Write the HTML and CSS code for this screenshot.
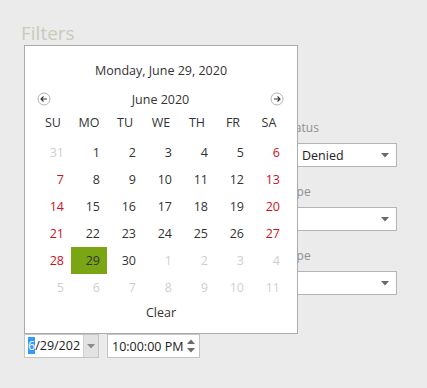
FILE: index.html
```html
<!DOCTYPE html>
<html>
<head>
<meta charset="utf-8">
<link rel="stylesheet" href="styles.css">
</head>
<body>
<div class="page">
  <h1 class="title">Filters</h1>
  <div class="form">
    <div class="col-left">
      <div class="field">
        <div class="label">Date</div>
        <div class="datetime">
          <div class="date-wrap">
            <div class="date-input">
              <span class="date-text"><span class="sel">6</span><span class="caret"></span>/29/2020</span>
              <span class="dd-btn"><svg width="8" height="5" viewBox="0 0 8 5"><path d="M0 0H8L4 4.5Z" fill="#8a8a8a"/></svg></span>
            </div>
            <div class="calendar">
              <div class="cal-title">Monday, June 29, 2020</div>
              <div class="cal-nav">
                <svg class="nav-icon" width="14" height="14" viewBox="0 0 14 14"><circle cx="7" cy="7" r="6" fill="none" stroke="#b4b4b4" stroke-width="1"/><path d="M10 7H4M6.5 4.5L4 7L6.5 9.5" fill="none" stroke="#333" stroke-width="1.1"/></svg>
                <span class="cal-month">June 2020</span>
                <svg class="nav-icon" width="14" height="14" viewBox="0 0 14 14"><circle cx="7" cy="7" r="6" fill="none" stroke="#b4b4b4" stroke-width="1"/><path d="M4 7H10M7.5 4.5L10 7L7.5 9.5" fill="none" stroke="#333" stroke-width="1.1"/></svg>
              </div>
              <div class="cal-grid">
                <span class="dow">SU</span><span class="dow">MO</span><span class="dow">TU</span><span class="dow">WE</span><span class="dow">TH</span><span class="dow">FR</span><span class="dow">SA</span>

                <span class="day other">31</span><span class="day">1</span><span class="day">2</span><span class="day">3</span><span class="day">4</span><span class="day">5</span><span class="day wkend">6</span>
                <span class="day wkend">7</span><span class="day">8</span><span class="day">9</span><span class="day">10</span><span class="day">11</span><span class="day">12</span><span class="day wkend">13</span>
                <span class="day wkend">14</span><span class="day">15</span><span class="day">16</span><span class="day">17</span><span class="day">18</span><span class="day">19</span><span class="day wkend">20</span>
                <span class="day wkend">21</span><span class="day">22</span><span class="day">23</span><span class="day">24</span><span class="day">25</span><span class="day">26</span><span class="day wkend">27</span>
                <span class="day wkend">28</span><span class="day selected">29</span><span class="day">30</span><span class="day other">1</span><span class="day other">2</span><span class="day other">3</span><span class="day other">4</span>
                <span class="day other">5</span><span class="day other">6</span><span class="day other">7</span><span class="day other">8</span><span class="day other">9</span><span class="day other">10</span><span class="day other">11</span>
              </div>
              <div class="cal-clear">Clear</div>
            </div>
          </div>
          <div class="time-input">
            <span class="time-text">10:00:00 PM</span>
            <span class="spin">
              <svg width="8" height="5" viewBox="0 0 8 5"><path d="M0 5H8L4 0.5Z" fill="#6a6a6a"/></svg>
              <svg width="8" height="5" viewBox="0 0 8 5"><path d="M0 0H8L4 4.5Z" fill="#6a6a6a"/></svg>
            </span>
          </div>
        </div>
      </div>
    </div>
    <div class="col-right">
      <div class="field">
        <div class="label">Status</div>
        <div class="select"><span class="select-text">Denied</span><svg width="8" height="5" viewBox="0 0 8 5"><path d="M0 0H8L4 4.5Z" fill="#6a6a6a"/></svg></div>
      </div>
      <div class="field">
        <div class="label">Type</div>
        <div class="select"><span class="select-text"></span><svg width="8" height="5" viewBox="0 0 8 5"><path d="M0 0H8L4 4.5Z" fill="#6a6a6a"/></svg></div>
      </div>
      <div class="field">
        <div class="label">Type</div>
        <div class="select"><span class="select-text"></span><svg width="8" height="5" viewBox="0 0 8 5"><path d="M0 0H8L4 4.5Z" fill="#6a6a6a"/></svg></div>
      </div>
    </div>
  </div>
</div>
</body>
</html>
```

FILE: styles.css
```css
html, body {
  margin: 0;
  padding: 0;
  background: #ebebeb;
  font-family: "Open Sans", "Noto Sans", sans-serif;
  color: #333;
}

.page {
  width: 427px;
  height: 388px;
  padding: 18px 0 0 21px;
  box-sizing: border-box;
}

.title {
  margin: 0;
  font-size: 19px;
  font-weight: 400;
  line-height: 30px;
  color: #c9cabb;
}

.form {
  display: grid;
  grid-template-columns: 263px 113px;
  margin-top: 72px;
}

.col-left {
  padding-left: 3px;
  padding-top: 191px;
}

.field {
  display: flex;
  flex-direction: column;
  gap: 7px;
}

.col-right {
  display: flex;
  flex-direction: column;
  gap: 17px;
}

.label {
  font-size: 12px;
  line-height: 16px;
  color: #8f8f8f;
}

.select {
  height: 24px;
  box-sizing: border-box;
  background: #fff;
  border: 1px solid #b5b5b5;
  display: flex;
  align-items: center;
  justify-content: space-between;
  padding: 0 7px 0 17px;
}

.select-text {
  font-size: 12.5px;
  color: #222;
}

.datetime {
  display: flex;
  gap: 8px;
}

.date-wrap {
  position: relative;
}

.date-input {
  width: 75px;
  height: 24px;
  box-sizing: border-box;
  background: #fff;
  border: 1px solid #c4c4c4;
  display: flex;
  overflow: hidden;
}

.date-text {
  flex: 1;
  overflow: hidden;
  white-space: nowrap;
  font-size: 12.5px;
  line-height: 22px;
  margin-left: 3px;
  margin-right: 3px;
  color: #222;
  display: flex;
}

.sel {
  background: #3399ff;
  color: #fff;
  line-height: 17px;
  margin-top: 2px;
  height: 17px;
}

.caret {
  width: 1px;
  height: 17px;
  margin-top: 2px;
  background: #000;
}

.dd-btn {
  width: 14px;
  flex: none;
  background: #e2e2e2;
  border-left: 1px solid #d0d0d0;
  display: flex;
  align-items: center;
  justify-content: center;
}

.time-input {
  width: 93px;
  height: 24px;
  box-sizing: border-box;
  background: #fff;
  border: 1px solid #c4c4c4;
  display: flex;
  align-items: center;
  justify-content: space-between;
  padding: 0 4px 0 4px;
}

.time-text {
  font-size: 12.5px;
  color: #222;
}

.spin {
  display: flex;
  flex-direction: column;
  gap: 4px;
}

.spin svg {
  display: block;
}

.calendar {
  position: absolute;
  left: 0;
  bottom: 100%;
  width: 274px;
  height: 289px;
  box-sizing: border-box;
  background: #fff;
  border: 1px solid #acacac;
  padding: 15px 10px 0 10px;
  display: flex;
  flex-direction: column;
}

.cal-title {
  text-align: center;
  font-size: 12.5px;
  line-height: 20px;
  color: #333;
}

.cal-nav {
  margin-top: 8px;
  height: 20px;
  display: flex;
  align-items: center;
  justify-content: space-between;
  padding: 0 3px 0 2px;
}

.nav-icon {
  display: block;
}

.cal-month {
  font-size: 12.5px;
  color: #333;
}

.cal-grid {
  display: grid;
  grid-template-columns: repeat(7, 36px);
  grid-template-rows: 28px repeat(6, 27px);
  margin-top: 2px;
}

.dow {
  text-align: center;
  font-size: 12.5px;
  line-height: 24px;
  color: #333;
}

.day {
  text-align: right;
  padding-right: 7px;
  font-size: 12.5px;
  line-height: 27px;
  color: #333;
}

.day.wkend {
  color: #cc1122;
}

.day.other {
  color: #cfcfcf;
}

.day.selected {
  background: #79a612;
}

.cal-clear {
  margin-top: 2px;
  text-align: center;
  font-size: 12.5px;
  line-height: 20px;
  color: #333;
}
```
